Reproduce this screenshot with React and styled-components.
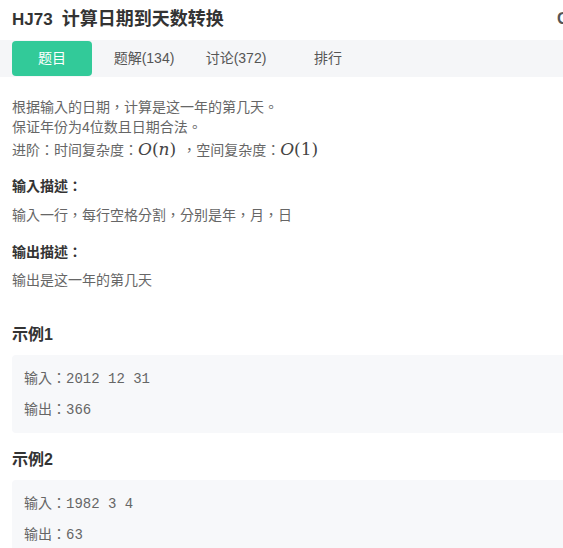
import React from "react";
import styled, { createGlobalStyle } from "styled-components";

const GlobalStyle = createGlobalStyle`
  html, body {
    margin: 0;
    padding: 0;
    background: #fff;
    overflow: hidden;
  }
  body {
    font-family: "Liberation Sans", "Noto Sans CJK TC", "Noto Sans CJK SC", sans-serif;
  }
`;

const Page = styled.div`
  width: 580px;
`;

const Header = styled.div`
  display: flex;
  justify-content: space-between;
  align-items: flex-start;
  height: 40px;
  padding: 8px 0 0 12px;
  box-sizing: border-box;
`;

const Title = styled.h1`
  margin: 0;
  font-family: "Liberation Sans", "Noto Sans CJK SC", sans-serif;
  font-size: 18px;
  line-height: 22px;
  font-weight: 700;
  color: #333;
`;

const TitleId = styled.span`
  font-size: 17px;
  margin-right: 9px;
`;

const HeaderTool = styled.span`
  width: 23px;
  font-size: 16px;
  line-height: 22px;
  font-weight: 700;
  color: #555;
`;

const TabBar = styled.div`
  display: flex;
  gap: 12px;
  height: 37px;
  padding: 1px 0 0 12px;
  box-sizing: border-box;
  background: #f5f6f8;
`;

const Tab = styled.div`
  width: 80px;
  height: 35px;
  padding-bottom: 3px;
  box-sizing: border-box;
  display: flex;
  align-items: center;
  justify-content: center;
  border-radius: 4px;
  font-size: 14px;
  background: ${(p) => (p.active ? "#32ca99" : "transparent")};
  color: ${(p) => (p.active ? "#fff" : "#555")};
`;

const Content = styled.div`
  padding: 20px 0 0 12px;
  color: #666;
  font-size: 14px;
`;

const Line = styled.div`
  line-height: ${(p) => p.lh || 20}px;
  white-space: nowrap;
`;

const Math = styled.span`
  font-family: "DejaVu Serif", "Liberation Serif", serif;
  font-size: 17px;
  color: #444;
  margin: 0 ${(p) => p.gap || 0}px 0 0;
`;

const MathVar = styled.i`
  font-style: italic;
`;

const Label = styled.div`
  margin-top: ${(p) => p.top}px;
  line-height: 20px;
  font-weight: 700;
  color: #333;
`;

const Text = styled.div`
  margin-top: ${(p) => p.top}px;
  line-height: 20px;
`;

const ExampleTitle = styled.h3`
  margin: ${(p) => p.top}px 0 9px;
  font-size: 16px;
  line-height: 22px;
  font-weight: 700;
  color: #333;
`;

const ExampleBox = styled.div`
  background: #f7f8fa;
  border-radius: 4px 0 0 4px;
  padding: 8px 12px;
  color: #666;
`;

const ExampleRow = styled.div`
  line-height: 30px;
  font-size: 14px;
`;

const Mono = styled.span`
  font-family: "Liberation Mono", "DejaVu Sans Mono", monospace;
  font-size: 14px;
  color: #666;
`;

const tabs = [
  { label: "题目", active: true },
  { label: "题解(134)" },
  { label: "讨论(372)" },
  { label: "排行" },
];

const examples = [
  { name: "示例1", input: "2012 12 31", output: "366", top: 34 },
  { name: "示例2", input: "1982 3 4", output: "63", top: 16 },
];

export default function App() {
  return (
    <Page>
      <GlobalStyle />
      <Header>
        <Title>
          <TitleId>HJ73</TitleId>计算日期到天数转换
        </Title>
        <HeaderTool>G</HeaderTool>
      </Header>
      <TabBar>
        {tabs.map((t) => (
          <Tab key={t.label} active={t.active}>
            {t.label}
          </Tab>
        ))}
      </TabBar>
      <Content>
        <Line>根据输入的日期，计算是这一年的第几天。</Line>
        <Line>保证年份为4位数且日期合法。</Line>
        <Line lh={24}>
          进阶：时间复杂度：
          <Math gap={6}>
            <MathVar>O</MathVar>(<MathVar>n</MathVar>)
          </Math>
          ，空间复杂度：
          <Math>
            <MathVar>O</MathVar>(1)
          </Math>
        </Line>
        <Label top={14}>输入描述：</Label>
        <Text top={9}>输入一行，每行空格分割，分别是年，月，日</Text>
        <Label top={17}>输出描述：</Label>
        <Text top={8}>输出是这一年的第几天</Text>
        {examples.map((ex) => (
          <div key={ex.name}>
            <ExampleTitle top={ex.top}>{ex.name}</ExampleTitle>
            <ExampleBox>
              <ExampleRow>
                输入：<Mono>{ex.input}</Mono>
              </ExampleRow>
              <ExampleRow>
                输出：<Mono>{ex.output}</Mono>
              </ExampleRow>
            </ExampleBox>
          </div>
        ))}
      </Content>
    </Page>
  );
}
